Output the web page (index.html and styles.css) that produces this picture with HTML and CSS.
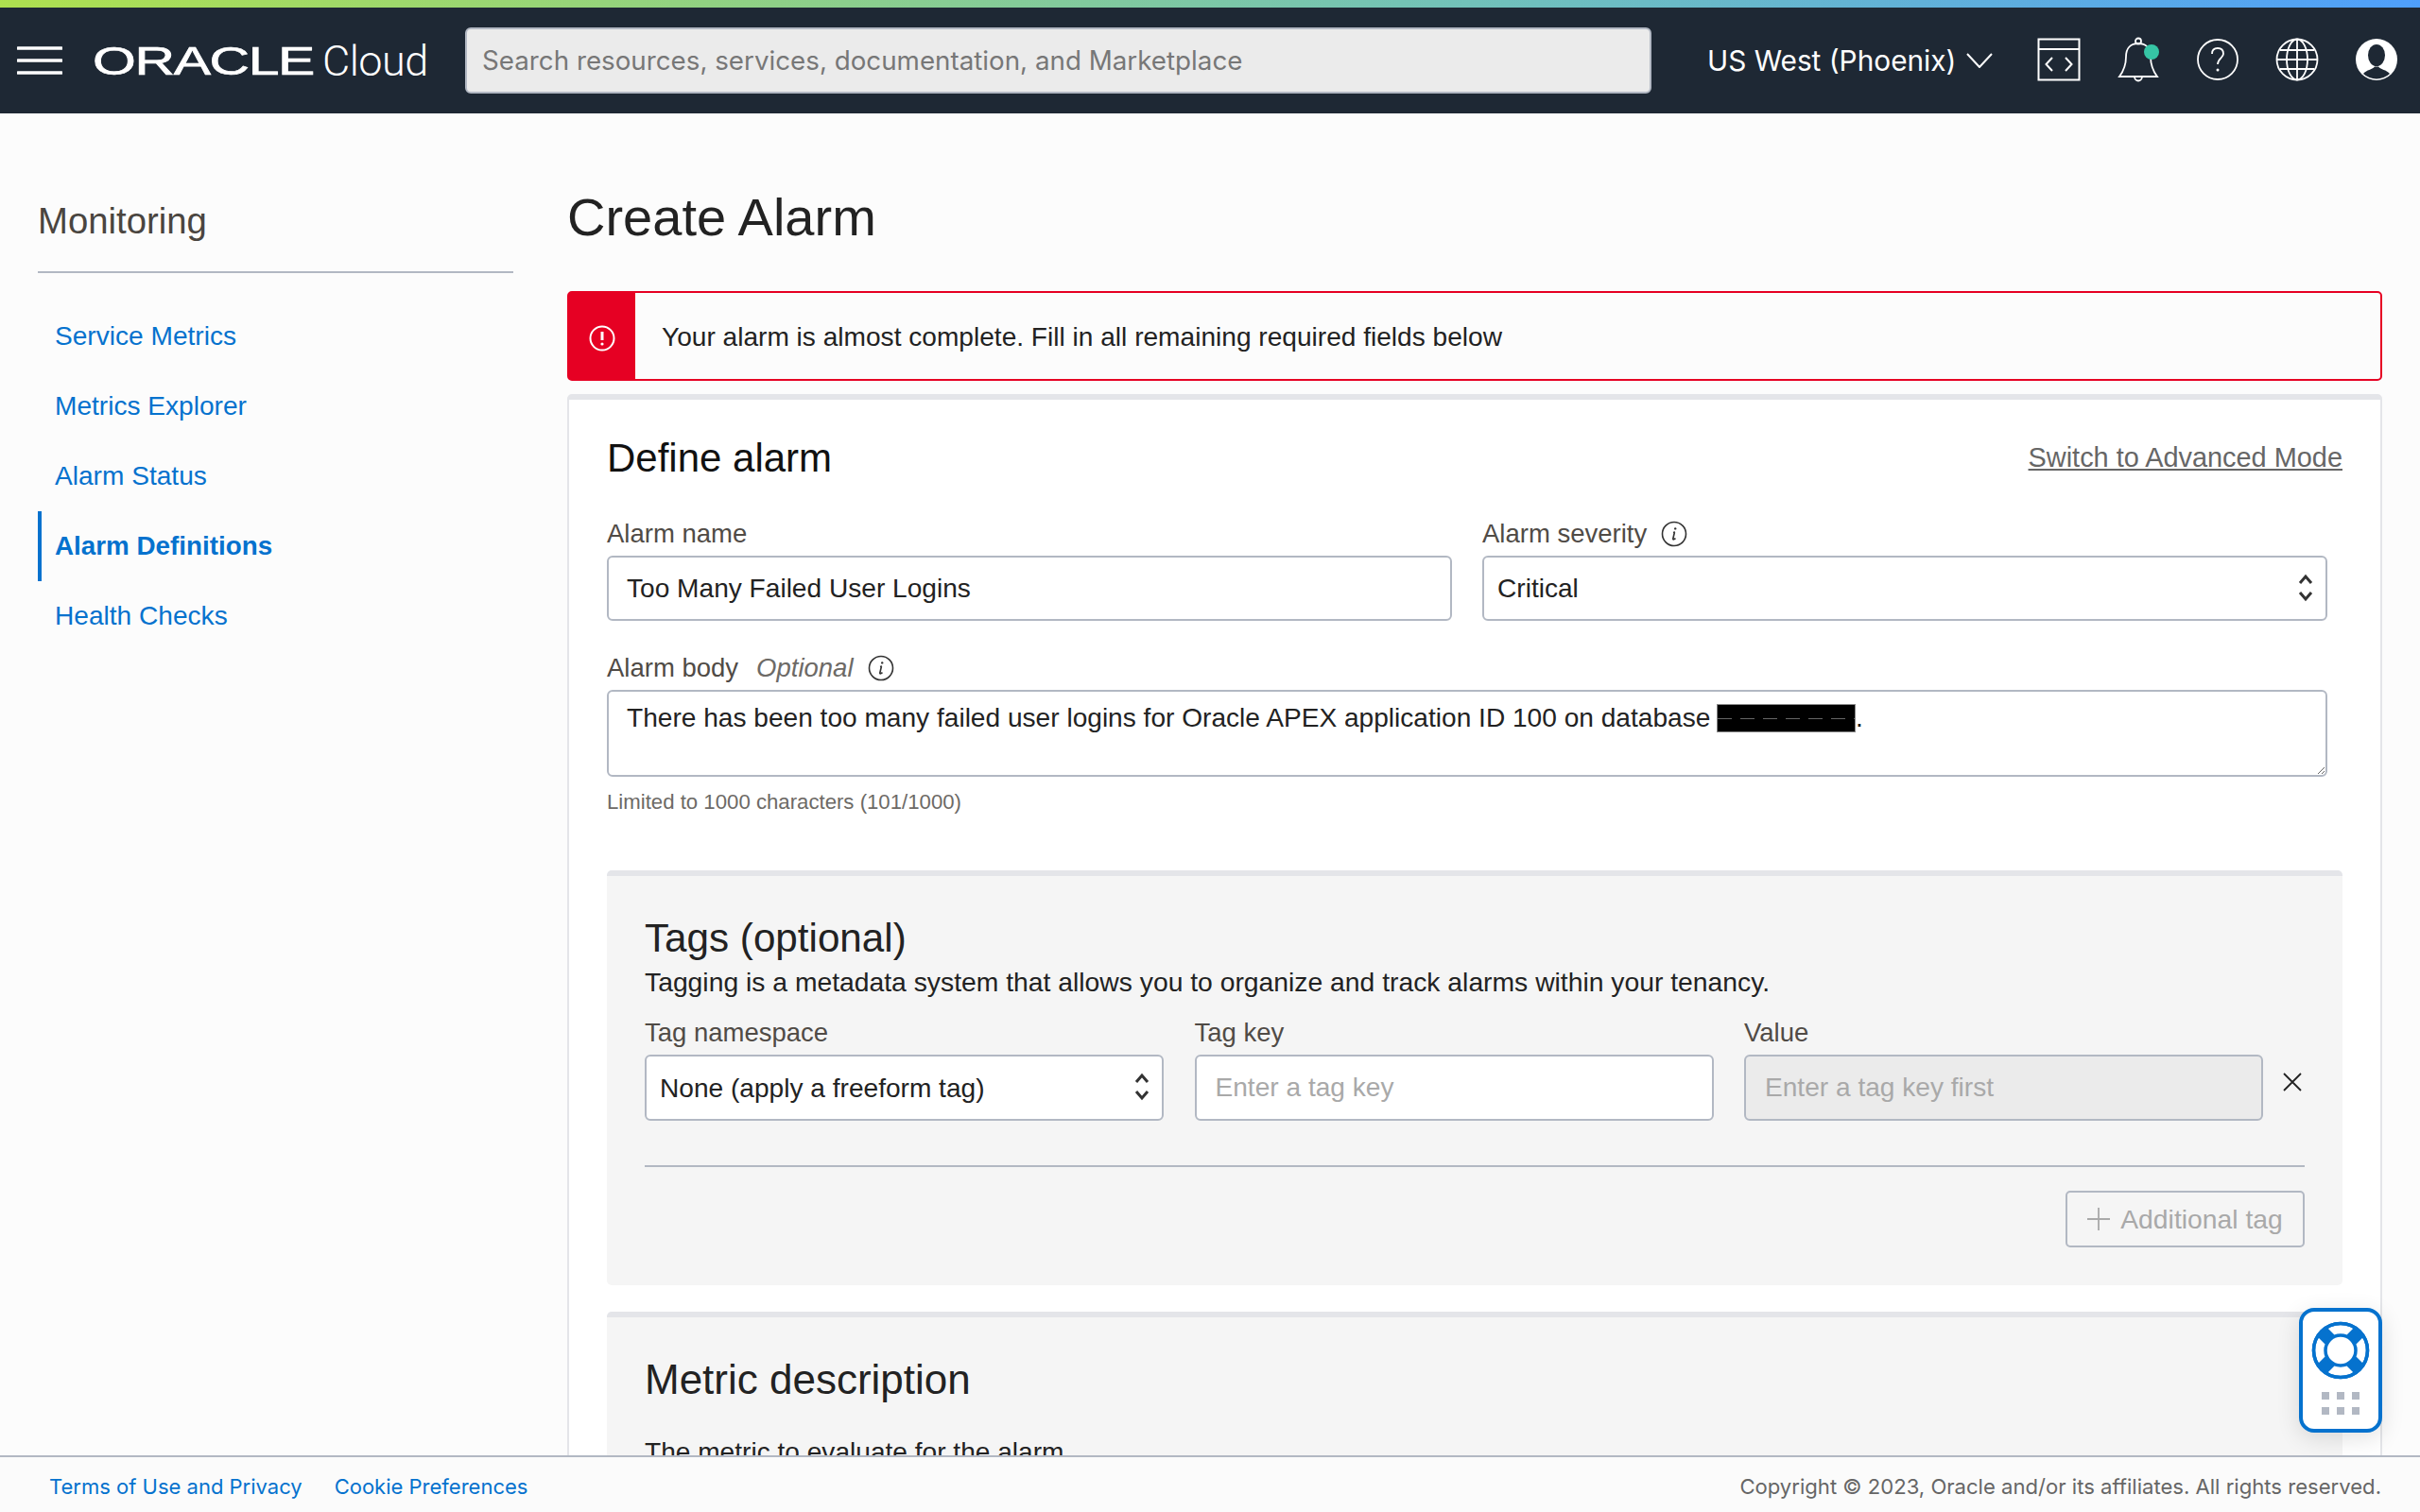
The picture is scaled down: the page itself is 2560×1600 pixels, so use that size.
FILE: index.html
```html
<!DOCTYPE html>
<html>
  <head>
    <title>Create Alarm</title>
    <meta name="viewport" content="width=device-width, initial-scale=1.0" />
    <link rel="stylesheet" href="styles.css">
  </head>
  <body>
    <div class="brand-strip"></div>
    <header class="topbar">
      <svg class="hamburger" width="48" height="30" viewBox="0 0 48 30">
        <path d="M1 2H47M1 15H47M1 28H47" stroke="#fff" stroke-width="3.5" stroke-linecap="round" />
      </svg>
      <div class="logo">
        <span class="logo-word">ORACLE</span>
        <span class="logo-cloud">Cloud</span>
      </div>
      <input class="search" type="text" placeholder="Search resources, services, documentation, and Marketplace" />
      <div class="region">
        <span>US West (Phoenix)</span>
        <svg width="28" height="16" viewBox="0 0 28 16"><path d="M1 1L14 15L27 1" fill="none" stroke="#fff" stroke-width="2" /></svg>
      </div>
      <div class="top-icons">
        <svg width="46" height="46" viewBox="0 0 46 46" fill="none" stroke="#fff" stroke-width="2">
          <rect x="1.5" y="1.5" width="43" height="43" />
          <path d="M1.5 12H44.5" />
          <path d="M16 21L9.5 28L16 35M30 21L36.5 28L30 35" />
        </svg>
        <svg class="bell" width="46" height="50" viewBox="0 0 46 50" fill="none" stroke="#fff" stroke-width="1.8">
          <circle cx="22" cy="5.5" r="3" />
          <path d="M2 43C8 35 9 28 9 22C9 13 14 8 22 8C30 8 35 13 35 22C35 28 36 35 42 43Z" />
          <path d="M18 43A4 4.5 0 0 0 26 43" />
          <circle cx="36" cy="17" r="8" fill="#36c5a5" stroke="none" />
        </svg>
        <svg width="46" height="46" viewBox="0 0 46 46" fill="none" stroke="#fff" stroke-width="1.8">
          <circle cx="23" cy="23" r="21" />
          <path d="M17 17C17 12 20 11 23 11C27 11 29 13 29 17C29 21 23 22 23 28" />
          <circle cx="23" cy="34" r="1.5" fill="#fff" stroke="none" />
        </svg>
        <svg width="46" height="46" viewBox="0 0 46 46" fill="none" stroke="#fff" stroke-width="1.8">
          <circle cx="23" cy="23" r="21.5" />
          <ellipse cx="23" cy="23" rx="11" ry="21.5" />
          <path d="M23 1.5V44.5M1.5 23H44.5M5 13H41M5 33H41" />
        </svg>
        <svg width="46" height="46" viewBox="0 0 46 46">
          <circle cx="23" cy="23" r="22" fill="#fff" />
          <ellipse cx="23" cy="18.5" rx="9" ry="11.5" fill="#1e2834" />
          <path d="M9 38C13 33.5 18 34 21 30.5H25C28 34 33 33.5 37 38A20.5 20.5 0 0 1 9 38Z" fill="#1e2834" />
        </svg>
      </div>
    </header>

    <div class="page">
      <nav class="sidebar">
        <h2 class="side-title">Monitoring</h2>
        <ul class="side-menu">
          <li><a href="#">Service Metrics</a></li>
          <li><a href="#">Metrics Explorer</a></li>
          <li><a href="#">Alarm Status</a></li>
          <li class="active"><a href="#">Alarm Definitions</a></li>
          <li><a href="#">Health Checks</a></li>
        </ul>
      </nav>

      <main class="content">
        <h1 class="page-title">Create Alarm</h1>
        <div class="alert">
          <div class="alert-icon">
            <svg width="28" height="28" viewBox="0 0 28 28" fill="none" stroke="#fff" stroke-width="2">
              <circle cx="14" cy="14" r="12.5" />
              <path d="M14 7V16" stroke-width="3" />
              <circle cx="14" cy="20" r="1.6" fill="#fff" stroke="none" />
            </svg>
          </div>
          <div class="alert-text">Your alarm is almost complete. Fill in all remaining required fields below</div>
        </div>

        <section class="card">
          <div class="card-head">
            <h2>Define alarm</h2>
            <a class="mode-link" href="#">Switch to Advanced Mode</a>
          </div>
          <div class="two-cols">
            <div class="field">
              <label>Alarm name</label>
              <input class="text-input" type="text" value="Too Many Failed User Logins" />
            </div>
            <div class="field">
              <label>Alarm severity
                <svg class="info" width="28" height="28" viewBox="0 0 28 28" fill="none" stroke="#333" stroke-width="1.6">
                  <circle cx="14" cy="14" r="12.5" />
                  <path d="M15 12L13 12.5M14.5 12L12.8 19C12.6 20 13.4 20.4 15.5 18.6" />
                  <circle cx="15.2" cy="8.4" r="1.2" fill="#333" stroke="none" />
                </svg>
              </label>
              <div class="select-box">
                <select class="text-input"><option>Critical</option></select>
                <svg class="updown" width="16" height="30" viewBox="0 0 16 30" fill="none" stroke="#333" stroke-width="3">
                  <path d="M2 10L8 3L14 10M2 20L8 27L14 20" />
                </svg>
              </div>
            </div>
          </div>
          <div class="field body-field">
            <label>Alarm body <em>Optional</em>
              <svg class="info" width="28" height="28" viewBox="0 0 28 28" fill="none" stroke="#333" stroke-width="1.6">
                <circle cx="14" cy="14" r="12.5" />
                <path d="M15 12L13 12.5M14.5 12L12.8 19C12.6 20 13.4 20.4 15.5 18.6" />
                <circle cx="15.2" cy="8.4" r="1.2" fill="#333" stroke="none" />
              </svg>
            </label>
            <div class="text-area">There has been too many failed user logins for Oracle APEX application ID 100 on database <span class="redacted"></span>.</div>
            <small>Limited to 1000 characters (101/1000)</small>
          </div>

          <section class="panel tags">
            <h2>Tags (optional)</h2>
            <p>Tagging is a metadata system that allows you to organize and track alarms within your tenancy.</p>
            <div class="tag-row">
              <div class="field">
                <label>Tag namespace</label>
                <div class="select-box">
                  <select class="text-input"><option>None (apply a freeform tag)</option></select>
                  <svg class="updown" width="16" height="30" viewBox="0 0 16 30" fill="none" stroke="#333" stroke-width="3">
                    <path d="M2 10L8 3L14 10M2 20L8 27L14 20" />
                  </svg>
                </div>
              </div>
              <div class="field">
                <label>Tag key</label>
                <input class="text-input key-input" type="text" placeholder="Enter a tag key" />
              </div>
              <div class="field">
                <label>Value</label>
                <input class="text-input key-input" type="text" placeholder="Enter a tag key first" disabled />
              </div>
              <svg class="tag-close" width="20" height="20" viewBox="0 0 20 20">
                <path d="M1 1L19 19M19 1L1 19" stroke="#222" stroke-width="1.8" />
              </svg>
            </div>
            <div class="tag-actions">
              <button class="add-tag" type="button" disabled>
                <svg width="24" height="24" viewBox="0 0 24 24"><path d="M12 0V24M0 12H24" stroke="#a9a9a9" stroke-width="1.8" /></svg>
                Additional tag
              </button>
            </div>
          </section>

          <section class="panel metric">
            <h2>Metric description</h2>
            <p>The metric to evaluate for the alarm</p>
          </section>
        </section>
      </main>
    </div>

    <footer class="footer">
      <div class="footer-links">
        <a href="#">Terms of Use and Privacy</a>
        <a href="#">Cookie Preferences</a>
      </div>
      <span>Copyright © 2023, Oracle and/or its affiliates. All rights reserved.</span>
    </footer>

    <div class="help-widget">
      <svg width="62" height="62" viewBox="0 0 62 62">
        <circle cx="31" cy="31" r="28.5" fill="#fff" stroke="#0572ce" stroke-width="3.5" />
        <path d="M19.5 19.5L11 11M42.5 19.5L51 11M19.5 42.5L11 51M42.5 42.5L51 51" stroke="#0572ce" stroke-width="14" />
        <circle cx="31" cy="31" r="28.5" fill="none" stroke="#0572ce" stroke-width="3.5" />
        <circle cx="31" cy="31" r="16" fill="#fff" stroke="#0572ce" stroke-width="3.5" />
      </svg>
      <div class="help-dots">
        <i></i><i></i><i></i><i></i><i></i><i></i>
      </div>
    </div>
  </body>
</html>
```

FILE: styles.css
```css
* {
  box-sizing: border-box;
}
html,
body {
  height: 100%;
}
body {
  margin: 0;
  background: #fcfcfc;
  color: #222;
  display: flex;
  flex-direction: column;
  overflow: hidden;
  font-family: "Liberation Sans", Arial, sans-serif;
  font-size: 28.1px;
}
a {
  text-decoration: none;
  color: #0572ce;
}
h1,
h2,
p {
  margin: 0;
  font-weight: 400;
}

.brand-strip {
  height: 8px;
  flex: none;
  background: linear-gradient(90deg, #aee04f, #72c2b8 60%, #4f9ffb);
}
.topbar {
  height: 112px;
  flex: none;
  background: #1e2834;
  display: flex;
  align-items: center;
  padding-left: 18px;
  color: #fff;
}
.hamburger {
  flex: none;
}
.logo {
  width: 394px;
  margin-left: 32px;
  display: flex;
  align-items: center;
  flex: none;
}
.logo-word {
  display: inline-block;
  width: 243px;
  font-size: 43px;
  transform: scaleX(1.37);
  transform-origin: left center;
  letter-spacing: -1px;
  -webkit-text-stroke: 0.7px #fff;
}
.logo-cloud {
  font-family: Roboto, sans-serif;
  font-weight: 300;
  font-size: 45px;
  letter-spacing: -0.5px;
}
.search {
  width: 1255px;
  height: 70px;
  flex: none;
  background: #ebebeb;
  border: 2px solid #b2b8c3;
  border-radius: 6px;
  padding: 0 16px;
  font-family: Inter, sans-serif;
  font-size: 27.75px;
}
.search::placeholder {
  color: #777;
  opacity: 1;
}
.region {
  margin-left: 59px;
  display: flex;
  align-items: center;
  gap: 11px;
  font-family: Inter, sans-serif;
  font-size: 29.8px;
  flex: none;
}
.top-icons {
  margin: -2px 0 0 47px;
  display: flex;
  align-items: center;
  gap: 38px;
}
.top-icons .bell {
  margin: 0 -1px 0 1px;
}

.page {
  flex: 1;
  min-height: 0;
  display: flex;
  overflow: hidden;
}
.sidebar {
  width: 600px;
  flex: none;
  padding: 88px 57px 0 40px;
}
.side-title {
  font-size: 38.3px;
  font-weight: 400;
  color: #4a4540;
  padding-bottom: 27px;
  border-bottom: 2px solid #b2b8c3;
  line-height: 52px;
}
.side-menu {
  list-style: none;
  margin: 30px 0 0;
  padding: 0;
}
.side-menu li {
  height: 74px;
  display: flex;
  align-items: center;
  padding-left: 18px;
}
.side-menu .active {
  border-left: 4px solid #0572ce;
  padding-left: 14px;
  font-size: 27.8px;
  font-weight: 700;
}

.content {
  flex: 1;
  min-width: 0;
  padding: 0 40px 0 0;
}
.page-title {
  font-size: 56px;
  line-height: 68px;
  margin: 76px 0 44px;
  color: #222;
}
.alert {
  height: 95px;
  display: flex;
  border: 2px solid #e60023;
  border-radius: 5px;
  margin-bottom: 14px;
}
.alert-icon {
  width: 70px;
  flex: none;
  background: #e60023;
  display: flex;
  align-items: center;
  justify-content: center;
  padding-top: 5px;
}
.alert-text {
  padding: 3px 0 0 28px;
  display: flex;
  align-items: center;
}

.card {
  background: #fff;
  border: 2px solid #e4e5e9;
  border-top-width: 6px;
  border-radius: 5px 5px 0 0;
  padding: 0 40px;
  min-height: 1200px;
}
.card-head {
  display: flex;
  justify-content: space-between;
  align-items: center;
  height: 76px;
  margin-top: 23px;
}
.card-head h2 {
  padding-top: 2px;
  font-size: 42px;
  color: #111;
}
.mode-link {
  color: #666;
  font-size: 28.9px;
  text-decoration: underline;
}
.two-cols {
  display: grid;
  grid-template-columns: 894px 894px;
  column-gap: 32px;
  margin-top: 24px;
}
.field label {
  display: flex;
  align-items: center;
  gap: 8px;
  height: 42px;
  padding-bottom: 4px;
  font-size: 27.5px;
  color: #504b46;
}
.field label em {
  margin-left: 11px;
  color: #6d6a66;
}
.info {
  margin-left: 7px;
}
.text-input {
  width: 100%;
  height: 69px;
  border: 2px solid #b2b8c3;
  border-radius: 6px;
  background: #fff;
  padding: 0 19px;
  font-family: "Liberation Sans", Arial, sans-serif;
  font-size: 28.1px;
  color: #222;
  appearance: none;
}
.key-input::placeholder {
  color: #a9a9a9;
  opacity: 1;
}
.key-input {
  padding: 0 20px;
}
.key-input:disabled {
  background: #ebebeb;
}
.select-box {
  position: relative;
}
.select-box .text-input {
  padding: 0 14px;
}
.updown {
  position: absolute;
  top: 19px;
  right: 15px;
}
.body-field {
  margin-top: 31px;
  width: 1820px;
}
.text-area {
  height: 92px;
  border: 2px solid #b2b8c3;
  border-radius: 6px;
  padding: 12px 19px;
  overflow: auto;
  resize: vertical;
}
.redacted {
  display: inline-block;
  position: relative;
  width: 147px;
  height: 30px;
  margin: 0 0 -6px -1px;
  background: #000;
  border: 1px solid #888;
}
.redacted::after {
  content: "";
  position: absolute;
  left: 0;
  right: 0;
  top: 14px;
  height: 1px;
  background: repeating-linear-gradient(90deg, #666 0 15px, transparent 15px 24px);
}
.body-field small {
  display: block;
  font-size: 22.2px;
  color: #6d6a66;
  margin-top: 14px;
}

.panel {
  background: #f5f5f5;
  border-top: 6px solid #e4e5e9;
  border-radius: 5px;
  padding: 0 40px;
}
.panel h2 {
  font-size: 42.2px;
  color: #222;
}
.tags {
  height: 439px;
  margin-top: 59px;
  padding-top: 42px;
}
.tags p {
  margin-top: 6px;
  font-size: 28.3px;
}
.tag-row {
  display: grid;
  grid-template-columns: 549px 549px 549px 1fr;
  column-gap: 32.5px;
  margin-top: 18px;
  align-items: start;
}
.tag-row .text-input {
  height: 70px;
}
.tag-close {
  margin: 61px 0 0 -12px;
}
.tag-actions {
  margin-top: 47px;
  border-top: 2px solid #b2b8c3;
  display: flex;
  justify-content: flex-end;
  padding-top: 25px;
}
.add-tag {
  width: 253px;
  height: 60px;
  background: transparent;
  border: 2px solid #b2b8c3;
  border-radius: 5px;
  color: #a9a9a9;
  font-family: "Liberation Sans", Arial, sans-serif;
  font-size: 28.3px;
  display: flex;
  align-items: center;
  justify-content: center;
  gap: 11px;
  padding: 0;
}
.metric {
  margin-top: 28px;
  height: 400px;
  padding-top: 41px;
}
.metric h2 {
  font-size: 44px;
}
.metric p {
  margin-top: 36px;
}

.footer {
  height: 60px;
  flex: none;
  position: relative;
  background: #fbfbfb;
  border-top: 2px solid #b2b8c3;
  display: flex;
  align-items: center;
  justify-content: space-between;
  padding: 3px 41px 0 52px;
  font-family: Inter, sans-serif;
  font-size: 22.1px;
  color: #666;
}
.footer-links {
  display: flex;
  gap: 34px;
  font-size: 22px;
}

.help-widget {
  position: absolute;
  left: 2432px;
  top: 1384px;
  width: 88px;
  height: 132px;
  background: #fff;
  border: 4px solid #0572ce;
  border-radius: 16px;
  box-shadow: 0 6px 24px rgba(0, 0, 0, 0.12);
  display: flex;
  flex-direction: column;
  align-items: center;
  padding-top: 10px;
}
.help-dots {
  margin-top: 13px;
  display: grid;
  grid-template-columns: repeat(3, 8px);
  gap: 8px;
}
.help-dots i {
  width: 8px;
  height: 8px;
  background: #b2b8c3;
}
```
